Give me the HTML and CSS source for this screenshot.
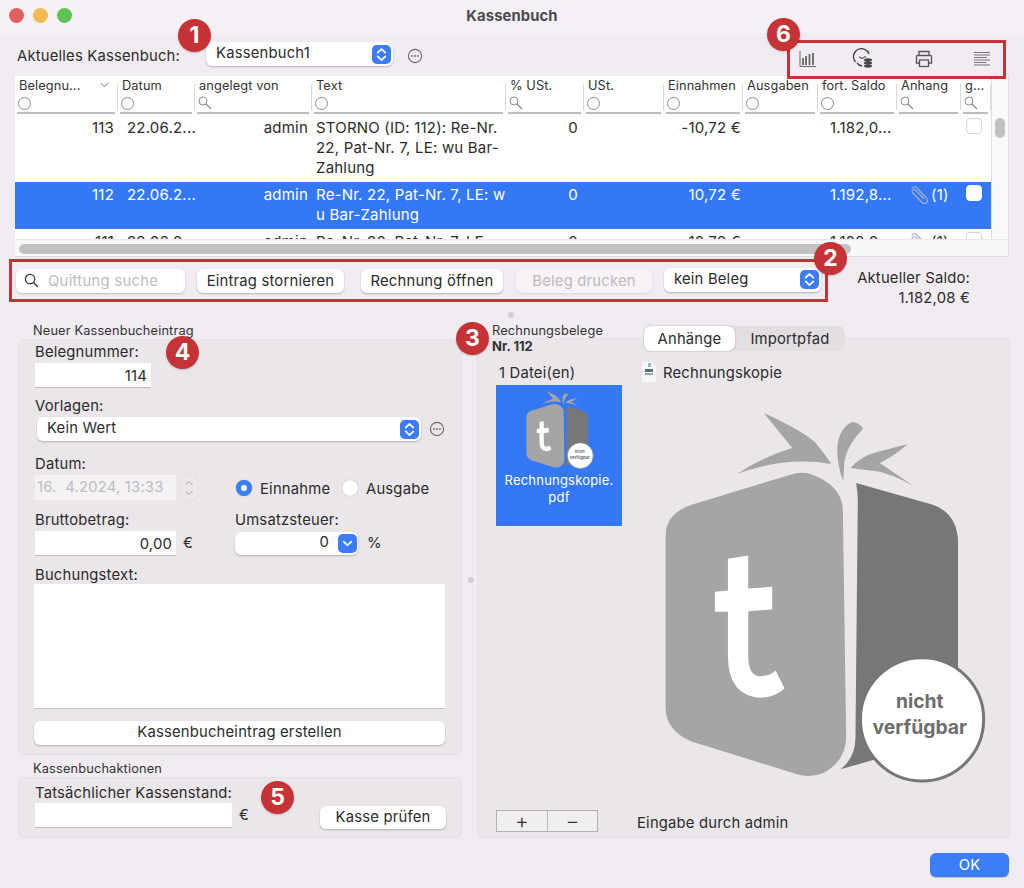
FILE: index.html
```html
<!DOCTYPE html>
<html lang="de">
<head>
<meta charset="utf-8">
<title>Kassenbuch</title>
<link rel="stylesheet" href="styles.css">
</head>
<body>
<svg class="defs" width="0" height="0" aria-hidden="true">
  <defs>
    <symbol id="logo" viewBox="130 60 970 1115">
      <path fill="#a5a5a5" d="M430 65Q560 125 590 160Q615 190 632 218Q560 205 480 215Q410 225 350 248Q430 195 515 170Z"/>
      <path fill="#a5a5a5" d="M668 270Q650 220 650 170Q655 110 695 92Q715 92 728 112Q680 160 672 210Z"/>
      <path fill="#a5a5a5" d="M690 230Q720 195 770 182L862 158Q820 195 778 215Q830 250 880 285Q820 250 770 240Q730 235 690 230Z"/>
      <path fill="#a5a5a5" d="M215 340L510 250Q540 240 570 248Q660 280 667 350L677 1040Q675 1110 610 1145Q570 1162 530 1150L215 1052Q135 1020 135 950L135 430Q137 365 215 340Z"/>
      <path fill="#777" d="M707 275L935 340Q1010 365 1013 450L1013 900L800 1095L660 1135Q705 1100 705 1040L712 330Q712 300 707 275Z"/>
      <path fill="#fff" d="M322 503L383 493L383 592L455 587L455 655L383 660L383 800Q385 860 425 855Q450 853 465 838L492 892Q460 920 420 920Q325 915 322 800L322 662L283 662L283 602L322 598Z"/>
      <circle cx="905" cy="985" r="185" fill="#fff" stroke="#777" stroke-width="9"/>
      <text x="898" y="952" class="logo-text">nicht</text>
      <text x="898" y="1028" class="logo-text">verfügbar</text>
    </symbol>
    <symbol id="updown" viewBox="0 0 20 20">
      <rect width="20" height="20" rx="5" fill="#3b7df6"/>
      <path d="M6 8l4-4 4 4M6 12l4 4 4-4" fill="none" stroke="#fff" stroke-width="1.8" stroke-linecap="round" stroke-linejoin="round"/>
    </symbol>
    <symbol id="more" viewBox="0 0 16 16">
      <circle cx="8" cy="8" r="6.6" fill="none" stroke="#6c6c6c" stroke-width="1.1"/>
      <circle cx="5" cy="8" r=".9" fill="#6c6c6c"/><circle cx="8" cy="8" r=".9" fill="#6c6c6c"/><circle cx="11" cy="8" r=".9" fill="#6c6c6c"/>
    </symbol>
    <symbol id="mag" viewBox="0 0 14 14">
      <circle cx="5" cy="5" r="4" fill="none" stroke="#8b8b8b"/>
      <path d="M8 8l5 5" stroke="#8b8b8b" stroke-width="1.3"/>
    </symbol>
    <symbol id="clip" viewBox="0 0 20 20">
      <path d="M2.500 3.500C4.500 1 7 1.500 8.500 3.500L17.500 13C19.500 15.500 18 18.500 15.500 18.500C14 18.500 13 17.500 12 16.500L3.500 7.500C2.500 6 3.500 4.500 5 4.500C6 4.500 7 5.500 8 6.500L15 14" fill="none" stroke="#a3b2c6" stroke-width="1.200"/>
    </symbol>
  </defs>
</svg>

<header class="titlebar">
  <span class="lights"><i class="light red"></i><i class="light yellow"></i><i class="light green"></i></span>
  <h1 class="title">Kassenbuch</h1>
</header>

<div class="book-row">
  <span class="txt">Aktuelles Kassenbuch:</span>
  <div class="select book-select"><span>Kassenbuch1</span><svg class="updown"><use href="#updown"/></svg></div>
  <svg class="more"><use href="#more"/></svg>
</div>

<section class="table">
  <div class="table-view">
    <div class="cols">
      <div class="row head">
        <div class="hc"><div class="hl">Belegnu...<svg class="chev" viewBox="0 0 10 6"><path d="M1 1l4 4 4-4" fill="none" stroke="#777" stroke-width="1.100"/></svg></div><i class="circ"></i></div>
        <div class="hc"><div class="hl">Datum</div><i class="circ"></i></div>
        <div class="hc"><div class="hl">angelegt von</div><svg class="magi"><use href="#mag"/></svg></div>
        <div class="hc"><div class="hl">Text</div><i class="circ"></i></div>
        <div class="hc"><div class="hl">% USt.</div><svg class="magi"><use href="#mag"/></svg></div>
        <div class="hc"><div class="hl">USt.</div><i class="circ"></i></div>
        <div class="hc"><div class="hl">Einnahmen</div><i class="circ"></i></div>
        <div class="hc"><div class="hl">Ausgaben</div><i class="circ"></i></div>
        <div class="hc"><div class="hl">fort. Saldo</div><i class="circ"></i></div>
        <div class="hc"><div class="hl">Anhang</div><svg class="magi"><use href="#mag"/></svg></div>
        <div class="hc"><div class="hl">g...</div><svg class="magi"><use href="#mag"/></svg></div>
      </div>
      <div class="row data r1">
        <div class="c num">113</div><div class="c date">22.06.2...</div><div class="c by">admin</div>
        <div class="c text">STORNO (ID: 112): Re-Nr.<br>22, Pat-Nr. 7, LE: wu Bar-<br>Zahlung</div>
        <div class="c pct">0</div><div class="c"></div><div class="c eur">-10,72 €</div><div class="c"></div>
        <div class="c saldo">1.182,0...</div><div class="c"></div><div class="c"><i class="check"></i></div>
      </div>
      <div class="row data r2 sel">
        <div class="c num">112</div><div class="c date">22.06.2...</div><div class="c by">admin</div>
        <div class="c text">Re-Nr. 22, Pat-Nr. 7, LE: w<br>u Bar-Zahlung</div>
        <div class="c pct">0</div><div class="c"></div><div class="c eur">10,72 €</div><div class="c"></div>
        <div class="c saldo">1.192,8...</div><div class="c att"><svg class="clip"><use href="#clip"/></svg>(1)</div><div class="c"><i class="check on"></i></div>
      </div>
      <div class="row data r3">
        <div class="c num">111</div><div class="c date">22.06.2...</div><div class="c by">admin</div>
        <div class="c text">Re-Nr. 20, Pat-Nr. 7, LE:</div>
        <div class="c pct">0</div><div class="c"></div><div class="c eur">10,72 €</div><div class="c"></div>
        <div class="c saldo">1.182,0...</div><div class="c att"><svg class="clip"><use href="#clip"/></svg>(1)</div><div class="c"><i class="check"></i></div>
      </div>
    </div>
    <div class="vscroll"><i class="vthumb"></i></div>
  </div>
  <div class="hscroll"><i class="hthumb"></i></div>
</section>

<div class="tool-row">
  <div class="mark-box actions">
    <div class="search">
      <svg class="search-ic" viewBox="0 0 16 16"><circle cx="6.500" cy="6.500" r="5" fill="none" stroke="#333" stroke-width="1.300"/><path d="M10.300 10.300l4.400 4.400" stroke="#333" stroke-width="1.500"/></svg>
      <span>Quittung suche</span>
    </div>
    <button class="btn storno">Eintrag stornieren</button>
    <button class="btn open">Rechnung öffnen</button>
    <button class="btn print" disabled>Beleg drucken</button>
    <div class="select beleg"><span>kein Beleg</span><svg class="updown"><use href="#updown"/></svg></div>
  </div>
  <div class="saldo-sum txt">Aktueller Saldo:<br>1.182,08 €</div>
</div>

<div class="grip-row"><i class="grip"></i></div>

<main class="main">
  <div class="left">
    <div class="cap">Neuer Kassenbucheintrag</div>
    <section class="panel entry">
      <div class="lab">Belegnummer:</div>
      <div class="field num-field">114</div>
      <div class="lab l-vor">Vorlagen:</div>
      <div class="vor-row">
        <div class="select vor"><span>Kein Wert</span><svg class="updown"><use href="#updown"/></svg></div>
        <svg class="more"><use href="#more"/></svg>
      </div>
      <div class="lab l-dat">Datum:</div>
      <div class="date-row">
        <div class="field date-field">16.&nbsp; 4.2024, 13:33</div>
        <div class="stepper"><svg viewBox="0 0 14 24"><path d="M3.500 9l3.500-3.500L10.500 9M3.500 15l3.500 3.500 3.500-3.500" fill="none" stroke="#c4c4c4" stroke-width="1.400"/></svg></div>
        <label class="radio r-ein"><i class="dot on"></i><span>Einnahme</span></label>
        <label class="radio r-aus"><i class="dot"></i><span>Ausgabe</span></label>
      </div>
      <div class="two">
        <div class="lab">Bruttobetrag:</div>
        <div class="lab">Umsatzsteuer:</div>
        <div class="with-unit"><div class="field amount">0,00</div><span class="txt">€</span></div>
        <div class="with-unit vat-wrap">
          <div class="select vat"><span>0</span><svg class="updown" viewBox="0 0 20 20"><rect width="20" height="20" rx="5" fill="#3b7df6"/><path d="M6 8l4 4 4-4" fill="none" stroke="#fff" stroke-width="1.800" stroke-linecap="round" stroke-linejoin="round"/></svg></div>
          <span class="txt">%</span>
        </div>
      </div>
      <div class="lab l-buch">Buchungstext:</div>
      <div class="area"></div>
      <button class="btn create">Kassenbucheintrag erstellen</button>
    </section>
    <div class="cap cap2">Kassenbuchaktionen</div>
    <section class="panel check-panel">
      <div class="check-main">
        <div class="lab">Tatsächlicher Kassenstand:</div>
        <div class="with-unit"><div class="field stand"></div><span class="txt">€</span></div>
      </div>
      <button class="btn pruefen">Kasse prüfen</button>
    </section>
  </div>

  <div class="split-col"><i class="grip grip-v"></i></div>

  <div class="right">
    <div class="right-head">
      <div class="cap rb">Rechnungsbelege<strong class="nr">Nr. 112</strong></div>
      <div class="tabs"><span class="tab active">Anhänge</span><span class="tab">Importpfad</span></div>
    </div>
    <section class="panel files">
      <div class="files-head">
        <span class="txt count">1 Datei(en)</span>
        <span class="doc-name txt">
          <svg class="doc" viewBox="0 0 16 20"><path d="M1 0h10l4 4v16H1z" fill="#f7f7f7"/><rect x="4" y="7" width="8" height="3" fill="#5b6f8a"/><rect x="4" y="11" width="8" height="2" fill="#9aa7b8"/><path d="M7 1h3v4H7z" fill="#9db7dc"/></svg>
          Rechnungskopie</span>
      </div>
      <div class="files-body">
        <div class="tile">
          <svg class="tile-logo"><use href="#logo"/></svg>
          <div class="tile-name">Rechnungskopie.<br>pdf</div>
        </div>
        <svg class="big-logo"><use href="#logo"/></svg>
      </div>
      <div class="files-foot">
        <div class="plusminus"><span>+</span><span>−</span></div>
        <span class="txt by-admin">Eingabe durch admin</span>
      </div>
    </section>
  </div>
</main>

<footer class="foot"><button class="ok">OK</button></footer>

<div class="mark-box tools">
  <svg class="ti" viewBox="0 0 18 18"><path d="M1 1v15.500h16" fill="none" stroke="#666" stroke-width="1"/><path d="M4 8v7M7 6v9M10.500 4v11M14 3v12" stroke="#666" stroke-width="1.800"/></svg>
  <svg class="ti" viewBox="0 0 22 22"><path d="M3.500 14A8 8 0 1 1 17 6" fill="none" stroke="#444" stroke-width="1.300"/><path d="M5 15a8 8 0 0 0 5 3" fill="none" stroke="#444" stroke-width="1.300"/><path d="M7 9l3 1.500 4-2" fill="none" stroke="#444" stroke-width="1.100"/><ellipse cx="16" cy="12" rx="4" ry="1.700" fill="#444"/><ellipse cx="16" cy="15" rx="4" ry="1.700" fill="#444"/><ellipse cx="16" cy="18" rx="4" ry="1.700" fill="#444"/></svg>
  <svg class="ti" viewBox="0 0 18 18"><path d="M4 6V1.500h10V6M4 13H1.500V6.500a1 1 0 0 1 1-1h13a1 1 0 0 1 1 1V13H14" fill="none" stroke="#555" stroke-width="1.300"/><rect x="4.500" y="10" width="9" height="6.500" fill="none" stroke="#555" stroke-width="1.300"/></svg>
  <svg class="ti" viewBox="0 0 18 18"><path d="M1 2.500h16M1 5h16M1 7.500h13M1 10h16M1 12.500h12M1 15h16" stroke="#777" stroke-width="1.100"/></svg>
</div>

<span class="badge b1">1</span>
<span class="badge b2">2</span>
<span class="badge b3">3</span>
<span class="badge b4">4</span>
<span class="badge b5">5</span>
<span class="badge b6">6</span>
</body>
</html>
```

FILE: styles.css
```css
* { box-sizing: border-box; }
html, body { margin: 0; padding: 0; }
body {
  width: 1024px;
  height: 888px;
  overflow: hidden;
  position: relative;
  background: #f1ebf2;
  color: #2c2c2c;
  font-family: "Inter", "Liberation Sans", sans-serif;
  font-size: 14.800px;
}
.defs { position: absolute; }
.txt { font-size: 14.800px; letter-spacing: .2px; }

.titlebar {
  height: 33px;
  display: flex;
  align-items: center;
  justify-content: center;
  position: relative;
  background: #f5f1f6;
}
.lights { position: absolute; left: 9px; top: 8px; display: flex; gap: 9px; }
.light { width: 15px; height: 15px; border-radius: 50%; }
.red { background: #e2605e; }
.yellow { background: #f2bb52; }
.green { background: #5cc453; }
.title { margin: -1px 0 0; font-size: 14.800px; font-weight: 700; color: #4c4a4d; letter-spacing: .1px; }

.book-row { height: 43px; display: flex; align-items: center; padding-left: 17px; padding-top: 2px; }
.select {
  display: flex;
  align-items: center;
  justify-content: space-between;
  background: #fff;
  border-radius: 6px;
  box-shadow: 0 1px 2px rgba(0,0,0,.25);
  padding: 0 2px 0 10px;
  letter-spacing: .2px;
}
.select span { padding-bottom: 2px; }
.updown { width: 19px; height: 19px; flex: none; }
.more { width: 16px; height: 16px; flex: none; }
.book-select { width: 187px; height: 24px; margin-left: 26px; margin-right: 14px; margin-top: -3px; }

.table { margin: 0 15px; height: 181px; width: 994px; background: #f8f8f8; display: flex; flex-direction: column; border-right: 1px solid #dcdcdc; border-bottom: 1px solid #dcdcdc; }
.table-view { height: 163px; display: flex; background: #fff; overflow: hidden; }
.cols { width: 976px; }
.row { display: grid; grid-template-columns: 103px 77px 117px 194px 78px 80px 79px 75px 79px 64px 30px; }
.head { height: 38px; }
.hc { margin-right: 3px; margin-left: 2px; height: 38px; border-bottom: 2px solid #bdbdbd; position: relative; padding-top: 1px; }
.hc::after { content: ""; position: absolute; right: -3px; top: 8px; height: 26px; width: 1px; background: #d9d9d9; }
.hl { font-size: 12.800px; line-height: 18px; padding-left: 2px; letter-spacing: .1px; white-space: nowrap; overflow: hidden; display: flex; justify-content: space-between; padding-right: 4px; color: #333; }
.chev { width: 9px; height: 6px; margin-top: 5px; margin-right: 2px; }
.circ { display: block; width: 13px; height: 13px; border: 1px solid #8c8c8c; border-radius: 50%; margin: 2px 0 0 1px; }
.magi { display: block; width: 14px; height: 14px; margin: 1px 0 0 1px; }
.data { font-size: 15px; line-height: 19.800px; letter-spacing: .2px; }
.r1 { height: 68px; padding-top: 4px; }
.r2 { height: 47px; padding-top: 3px; }
.r3 { height: 20px; margin-top: 3px; padding-top: 0; }
.sel { background: #3578f6; color: #fff; }
.c { white-space: nowrap; overflow: visible; min-width: 0; }
.num { text-align: right; padding-right: 4px; }
.date { padding-left: 9px; }
.by { text-align: right; padding-right: 4px; }
.text { padding-left: 4px; }
.pct { text-align: right; padding-right: 6px; }
.eur { text-align: right; padding-right: 2px; }
.saldo { padding-left: 12px; }
.att { display: flex; align-items: flex-start; padding-left: 12px; gap: 2px; }
.clip { width: 20px; height: 20px; flex: none; }
.check { display: block; width: 16px; height: 16px; border: 1px solid #d4d4d4; border-radius: 4px; background: #fff; margin: 0 0 0 5px; }
.check.on { border-color: #fff; }
.vscroll { width: 18px; border-left: 1px solid #dedede; background: #fafafa; padding: 42px 3px 0; }
.vthumb { display: block; width: 10px; height: 20px; border-radius: 5px; background: #c2c2c2; }
.hscroll { height: 17px; padding: 4px 0 0 4px; border-top: 1px solid #e8e8e8; }
.hthumb { display: block; width: 832px; height: 10px; border-radius: 5px; background: #c2c2c2; }

.tool-row { display: flex; margin: 2px 0 0 9px; height: 43px; }
.mark-box { border: 3px solid #c63337; }
.actions { width: 819px; height: 43px; display: flex; align-items: center; padding-left: 4px; }
.btn {
  font: inherit;
  font-size: 14.800px;
  letter-spacing: .2px;
  color: #2c2c2c;
  background: #fff;
  border: 0;
  border-radius: 6px;
  box-shadow: 0 1px 2px rgba(0,0,0,.25);
  height: 24px;
  padding: 0;
}
.search { width: 169px; height: 24px; margin-right: 12px; background: #fff; border-radius: 6px; box-shadow: 0 1px 2px rgba(0,0,0,.2); display: flex; align-items: center; padding-left: 8px; color: #bdbdbd; letter-spacing: .3px; }
.search-ic { width: 15px; height: 15px; margin-right: 9px; }
.storno { width: 147px; margin-right: 17px; }
.open { width: 142px; margin-right: 13px; }
.print { width: 136px; margin-right: 12px; background: #f7f3f7; color: #bdbabd; box-shadow: 0 1px 2px rgba(0,0,0,.1); }
.beleg { width: 157px; height: 24px; margin-top: -2px; }
.saldo-sum { width: 142px; text-align: right; line-height: 20px; padding-top: 9px; }

.grip-row { height: 22px; padding: 10px 0 0 508px; }
.grip { display: block; width: 6px; height: 6px; border-radius: 50%; background: #d2ced2; }
.main { display: flex; padding-left: 18px; }
.left { width: 444px; }
.cap { font-size: 12.800px; padding-left: 15px; height: 14px; line-height: 14px; letter-spacing: .15px; color: #333; white-space: nowrap; }
.panel { background: #eae6ea; border-radius: 6px; border: 1px solid #e6e2e6; }
.entry { height: 416px; margin-top: 1px; padding: 2px 16px 0 16px; }
.lab { font-size: 14.800px; line-height: 20px; letter-spacing: .2px; height: 20px; }
.entry > .lab:first-child + .field { margin-top: 1px; }
.field { background: #fff; height: 24px; line-height: 27px; text-align: right; padding-right: 4px; box-shadow: 0 1px 0 rgba(0,0,0,.18); letter-spacing: .2px; }
.num-field { width: 116px; }
.l-vor { margin-top: 9px; }
.vor-row { display: flex; align-items: center; margin-top: 1px; }
.vor { width: 384px; height: 24px; margin-left: 2px; margin-right: 8px; }
.l-dat { margin-top: 13px; }
.date-row { display: flex; align-items: center; height: 25px; margin-top: 1px; }
.date-field { width: 141px; height: 25px; text-align: left; padding-left: 2px; padding-right: 0; color: #bdbdbd; background: #f5f2f5; box-shadow: none; white-space: nowrap; line-height: 25px; }
.stepper { width: 16px; height: 24px; margin-left: 5px; margin-right: 39px; background: #ece8ec; border-radius: 5px; box-shadow: 0 0 1px rgba(0,0,0,.2); }
.stepper svg { display: block; width: 16px; height: 24px; }
.radio { display: flex; align-items: center; letter-spacing: .2px; padding-top: 1px; }
.radio span { padding-top: 2px; }
.r-ein { width: 106px; }
.dot { width: 16px; height: 16px; border-radius: 50%; background: #fff; margin-right: 8px; box-shadow: 0 0 1px rgba(0,0,0,.4); }
.dot.on { background: #fff; border: 5px solid #3b7df6; }
.two { display: grid; grid-template-columns: 200px 1fr; margin-top: 10px; }
.with-unit { display: flex; align-items: center; gap: 7px; margin-top: 1px; }
.amount { width: 141px; }
.vat-wrap { gap: 9px; }
.vat { width: 123px; height: 23px; justify-content: flex-end; gap: 9px; padding-right: 1px; }
.l-buch { margin-top: 10px; }
.area { width: 411px; height: 124px; margin: -1px 0 0 -1px; background: #fff; box-shadow: 0 1px 0 rgba(0,0,0,.15); }
.create { display: block; width: 411px; margin: 13px 0 0 -1px; padding-bottom: 2px; }
.cap2 { margin-top: 7px; }
.check-panel { height: 61px; margin-top: 1px; padding: 5px 15px 0 16px; display: flex; justify-content: space-between; }
.stand { width: 197px; }
.check-main .with-unit { gap: 7px; margin-top: 0; }
.pruefen { width: 126px; height: 23px; margin-top: 23px; padding-bottom: 2px; }

.split-col { width: 15px; position: relative; }
.grip-v { position: absolute; left: 6px; top: 253px; }
.right { width: 533px; }
.right-head { display: flex; height: 26px; position: relative; z-index: 1; }
.rb { width: 167px; }
.nr { display: block; font-size: 13px; line-height: 15px; padding-top: 1px; letter-spacing: 0; }
.tabs { margin-top: 2px; width: 201px; height: 25px; display: flex; background: #e2dee2; border-radius: 7px; letter-spacing: .2px; }
.tab { flex: 1; display: flex; align-items: center; justify-content: center; }
.tab.active { flex: none; width: 91px; background: #fff; border-radius: 7px; box-shadow: 0 0 2px rgba(0,0,0,.3); }
.files { height: 500px; margin-top: -12px; padding: 21px 0 0 18px; }
.files-head { height: 25px; display: flex; align-items: center; }
.count { width: 145px; padding-left: 3px; }
.doc-name { display: flex; align-items: center; gap: 6px; }
.doc { width: 16px; height: 20px; margin-top: -2px; }
.files-body { height: 425px; display: flex; }
.tile { width: 126px; height: 141px; background: #3578f6; color: #fff; text-align: center; padding-top: 6px; font-size: 13px; line-height: 17px; letter-spacing: .2px; }
.tile-logo { display: block; width: 68px; height: 78px; margin: 0 auto; position: relative; left: 1px; }
.tile-name { margin-top: 3px; white-space: nowrap; }
.logo-text { font-family: "Inter", sans-serif; font-weight: 700; font-size: 58px; fill: #6e6e6e; text-anchor: middle; }
.big-logo { width: 323px; height: 372px; margin: 26px 0 0 42px; }
.files-foot { display: flex; align-items: center; }
.plusminus { width: 102px; height: 22px; display: flex; border: 1px solid #b0b0b0; background: #f0eef0; }
.plusminus span { flex: 1; text-align: center; line-height: 19px; font-size: 21px; font-weight: 300; color: #333; }
.plusminus span:first-child { border-right: 1px solid #b8b8b8; }
.by-admin { margin-left: 39px; padding-top: 3px; }

.foot { display: flex; justify-content: flex-end; padding: 15px 15px 0 0; }
.ok { width: 79px; height: 24px; border: 0; border-radius: 6px; background: #3b7df6; color: #fff; font: inherit; font-size: 14.800px; box-shadow: 0 1px 1px rgba(0,0,0,.2); }

.tools { position: absolute; left: 787px; top: 40px; width: 219px; height: 39px; }
.ti { position: absolute; top: 7px; width: 18px; height: 18px; }
.ti:nth-child(1) { left: 9px; }
.ti:nth-child(2) { left: 62px; width: 22px; height: 22px; top: 5px; }
.ti:nth-child(3) { left: 125px; }
.ti:nth-child(4) { left: 183px; }

.badge {
  position: absolute;
  width: 33px;
  height: 33px;
  border-radius: 50%;
  background: #c63337;
  color: #fff;
  font-weight: 700;
  font-size: 23px;
  line-height: 33px;
  text-align: center;
  box-shadow: 0 1px 2px rgba(0,0,0,.2);
}
.b1 { left: 178px; top: 19px; }
.b2 { left: 814px; top: 242px; }
.b3 { left: 456px; top: 322px; }
.b4 { left: 166px; top: 336px; }
.b5 { left: 261px; top: 781px; }
.b6 { left: 767px; top: 18px; }
```
